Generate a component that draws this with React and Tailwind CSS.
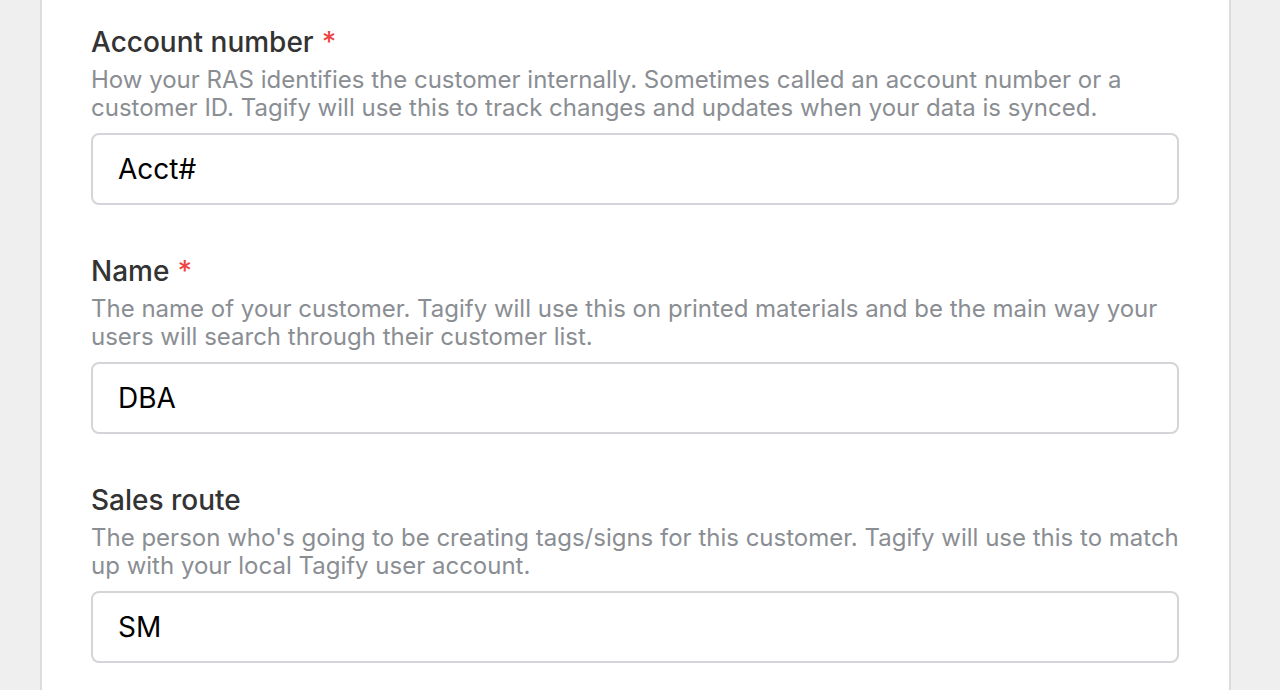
export default function App() {
  const fields = [
    {
      label: "Account number",
      required: true,
      desc: "How your RAS identifies the customer internally. Sometimes called an account number or a customer ID. Tagify will use this to track changes and updates when your data is synced.",
      value: "Acct#",
    },
    {
      label: "Name",
      required: true,
      desc: "The name of your customer. Tagify will use this on printed materials and be the main way your users will search through their customer list.",
      value: "DBA",
    },
    {
      label: "Sales route",
      required: false,
      desc: "The person who's going to be creating tags/signs for this customer. Tagify will use this to match up with your local Tagify user account.",
      value: "SM",
    },
  ];
  return (
    <div className="h-[690px] overflow-hidden bg-[#efefef] flex" style={{ fontFamily: "Inter, 'Noto Sans', sans-serif" }}>
      <div className="ml-[40px] w-[1191px] h-full bg-white border-x-2 border-[#dcdcdc] pt-[24px] pl-[49px] pr-[50px] flex flex-col gap-[48px]">
        {fields.map((f) => (
          <div key={f.label} className="flex flex-col">
            <div className="text-[28px] leading-[36px] font-medium text-[#333333]">
              {f.label}
              {f.required && <span className="text-[#ef4444] ml-[8px]">*</span>}
            </div>
            <div className="mt-[6px] text-[24px] leading-[28px] text-[#8a8e93]">{f.desc}</div>
            <div className="mt-[11px] h-[72px] border-2 border-[#d4d5d8] rounded-[8px] flex items-center px-[25px] text-[28px] text-black">
              {f.value}
            </div>
          </div>
        ))}
      </div>
    </div>
  );
}
